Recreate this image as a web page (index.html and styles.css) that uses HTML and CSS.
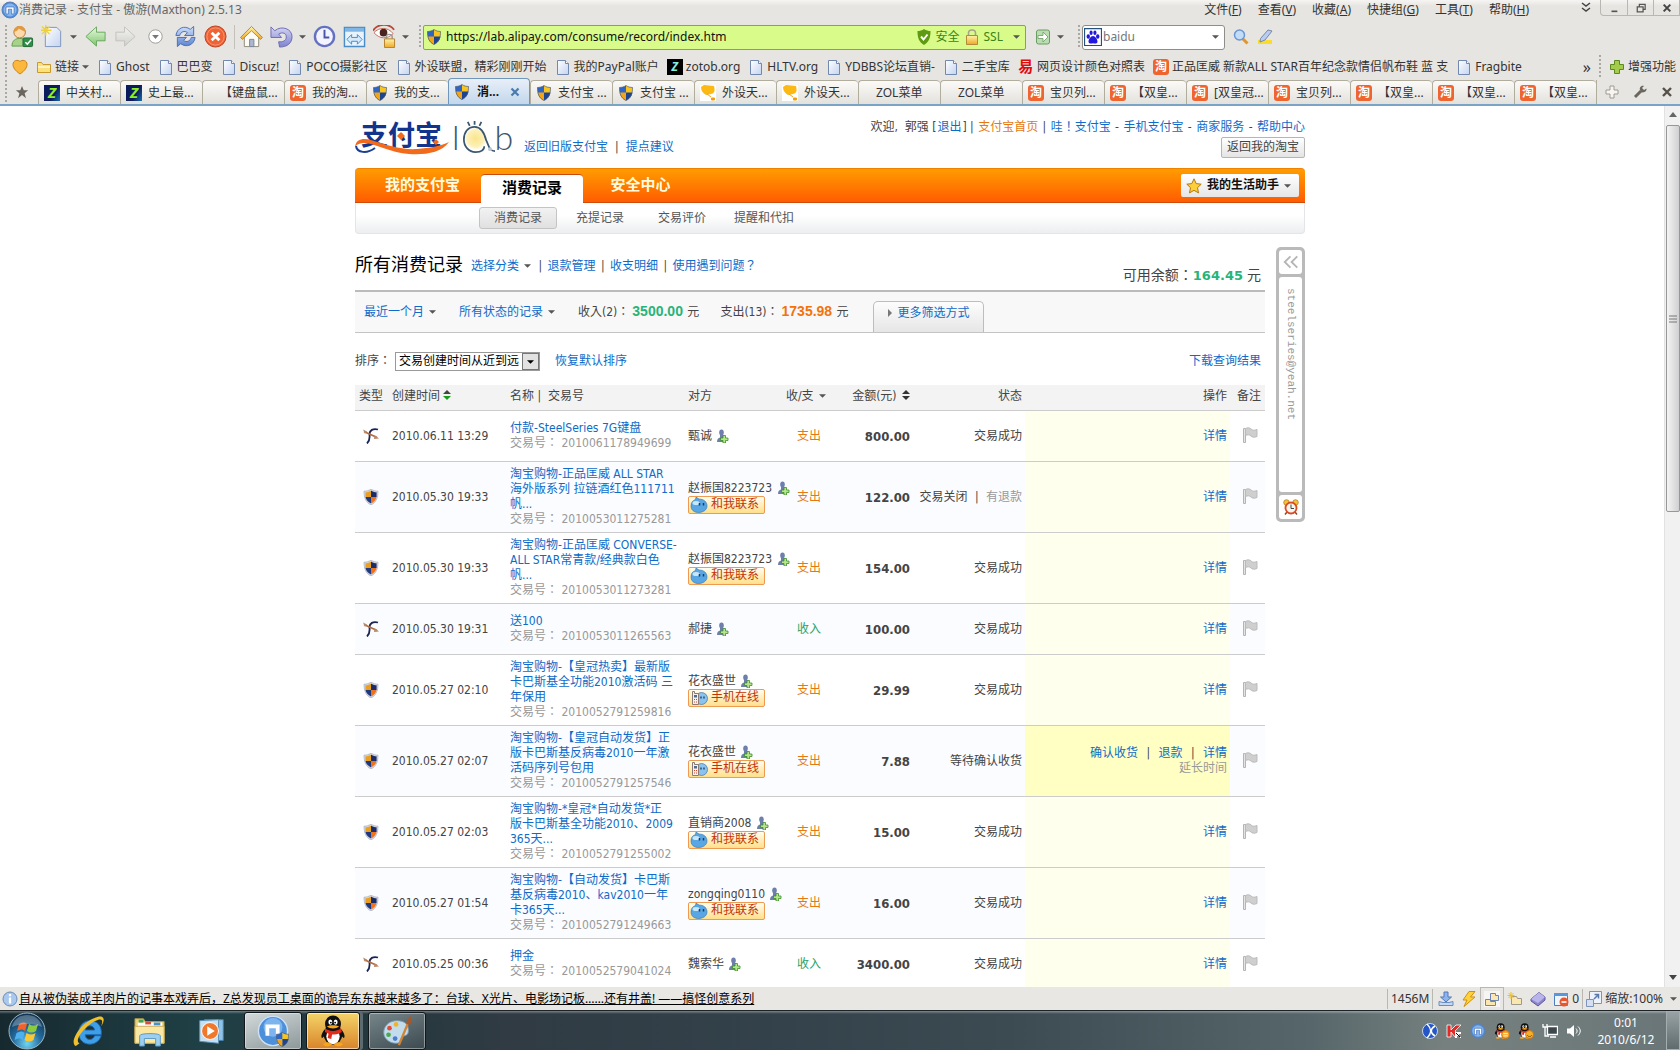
FILE: index.html
```
<!DOCTYPE html>
<html lang="zh-CN">
<head>
    <meta charset="UTF-8">
    <meta name="viewport" content="width=device-width, initial-scale=1.0">
    <title>消费记录 - 支付宝</title>
    <link rel="stylesheet" href="styles.css">
</head>
<body>

<!-- shared icons -->
<svg class="defs" aria-hidden="true">
    <defs>
        <linearGradient id="g-blue" x1="0" y1="0" x2="0" y2="1"><stop offset="0" stop-color="#cfe0fb"/><stop offset="1" stop-color="#5b82d0"/></linearGradient>
        <linearGradient id="g-green" x1="0" y1="0" x2="0" y2="1"><stop offset="0" stop-color="#eafae4"/><stop offset="1" stop-color="#7cc46b"/></linearGradient>
        <linearGradient id="g-gray" x1="0" y1="0" x2="0" y2="1"><stop offset="0" stop-color="#f4f4f2"/><stop offset="1" stop-color="#cfcecb"/></linearGradient>
        <linearGradient id="g-gold" x1="0" y1="0" x2="0" y2="1"><stop offset="0" stop-color="#fff3a8"/><stop offset="1" stop-color="#efa928"/></linearGradient>
        <linearGradient id="g-doc" x1="0" y1="0" x2="1" y2="1"><stop offset="0" stop-color="#fff"/><stop offset="1" stop-color="#c3d3f0"/></linearGradient>
        <linearGradient id="g-violet" x1="0" y1="0" x2="0" y2="1"><stop offset="0" stop-color="#d4d5f4"/><stop offset="1" stop-color="#7f83cc"/></linearGradient>
        <radialGradient id="g-orb" cx=".5" cy=".85" r=".8"><stop offset="0" stop-color="#6fd5f5"/><stop offset=".5" stop-color="#246a9c"/><stop offset="1" stop-color="#0e3353"/></radialGradient>
        <radialGradient id="g-bulb"><stop offset="0" stop-color="#fbe58a"/><stop offset=".7" stop-color="#fdf0b8"/><stop offset="1" stop-color="#fff"/></radialGradient>
    </defs>
    <symbol id="i-doc" viewBox="0 0 16 16"><path d="M2.5 1.500h8l3 3v11h-11z" fill="url(#g-doc)" stroke="#7388ae"/><path d="M10.500 1.500v3h3" fill="#fff" stroke="#7388ae"/></symbol>
    <symbol id="i-shield" viewBox="0 0 16 16"><path d="M8 .5C6 2 3.500 2.500 1.500 2.500 1.500 9 3 13 8 15.500z" fill="#2f66c4"/><path d="M8 .5c2 1.500 4.500 2 6.500 2C14.500 9 13 13 8 15.500z" fill="#f9c51c"/><path d="M1.600 7.500H8v8C4 13.500 2 11 1.600 7.500z" fill="#f2a516"/><path d="M8 7.500h6.400C14 11 12 13.500 8 15.500z" fill="#1c4493"/><path d="M8 .5C6 2 3.500 2.500 1.500 2.500 1.500 9 3 13 8 15.500 13 13 14.500 9 14.500 2.500 12.500 2.500 10 2 8 .5z" fill="none" stroke="#4c5a72" stroke-width=".7"/></symbol>
    <symbol id="i-pay" viewBox="0 0 16 16"><path d="M8 0C6 1.500 3.500 2.200 1 2.200 1 9 3 13.500 8 16 13 13.500 15 9 15 2.200 12.500 2.200 10 1.500 8 0z" fill="#d9dce4" stroke="#9aa0b0" stroke-width=".6"/><path d="M8 1.500C6.500 2.600 4.500 3.200 2.400 3.300V8H8z" fill="#e9a020"/><path d="M8 1.500c1.500 1.100 3.500 1.700 5.600 1.800V8H8z" fill="#1b2c68"/><path d="M2.500 8H8v6.500C5 12.800 3 11 2.500 8z" fill="#20397e"/><path d="M8 8h5.500c-.5 3-2.300 4.800-5.500 6.500z" fill="#f0731c"/></symbol>
    <symbol id="i-bow" viewBox="0 0 16 16"><path d="M15 1.500C10 0 6.500 2.500 6.500 6S7.500 12 4 15.500" fill="none" stroke="#1b2454" stroke-width="1.800"/><path d="M1 3.500l13 6" stroke="#b4693a" stroke-width="1.600"/><path d="M0 1.500l4 2-2 2.500zM11.500 7l4.500 3.500-5 .5z" fill="#b98868"/></symbol>
    <symbol id="i-flag" viewBox="0 0 16 17"><path d="M1.500 1.500v14h2v-14z" fill="#e4e4e4" stroke="#b4b4b4"/><path d="M3.500 1.500c2-1 4-1 5.500.5s3.500 1.500 6 .5v7c-2.500 1-4.500 1-6-.5s-3.500-1.500-5.500-.5z" fill="#cfcfcf" stroke="#bbb"/></symbol>
    <symbol id="i-add" viewBox="0 0 12 14"><ellipse cx="4.500" cy="3.500" rx="2.300" ry="3" fill="#6e7fae"/><path d="M3 5.500h3l1 3.500v4H0c0-3 1.500-4 3-4.500z" fill="#6e7fae"/><path d="M6 6.500h2.500V9H11v2.500H8.500V14H6v-2.500H3.500V9H6z" fill="#b6e58c" stroke="#3b8f26" stroke-width=".8"/></symbol>
    <symbol id="i-ww" viewBox="0 0 18 16"><path d="M6 0l3 2C14 2 17 5 17 9s-4 6.500-8.500 6.500S1 13 1 9s2-5.500 4.500-6.500z" fill="#58a6e4" stroke="#2a70b4" stroke-width=".6"/><ellipse cx="6" cy="6" rx="3.500" ry="2" fill="#c9e7fb"/><path d="M9.500 6v2.500M13.500 6v2.500" stroke="#153c66" stroke-width="1.500"/></symbol>
    <symbol id="i-phone" viewBox="0 0 18 16"><circle cx="11.500" cy="8.500" r="6" fill="#8cc3ee" stroke="#3c74a8" stroke-width=".7"/><path d="M11 6.500v2M14 6.500v2" stroke="#153c66" stroke-width="1.300"/><path d="M2.500 1.500v13h6v-11h-4v-2z" fill="#f5f1ee" stroke="#8c7b74"/><path d="M4 5h3v2.500H4z" fill="#4f6d8d"/><path d="M4 9.500h3M4 12h3" stroke="#d2402c" stroke-dasharray="1 1"/></symbol>
    <symbol id="i-cup" viewBox="0 0 16 16"><path d="M0 0h16v16H0z" fill="#fff"/><path d="M1 2l3-2 10 1c1 4 1 7-3 8l-5 1C3 8 1 6 1 2z" fill="#fcb813"/><path d="M7 9l4 3M11.500 13h3v2h-3z" stroke="#f0a010" fill="#f0a010"/></symbol>
    <symbol id="i-caret" viewBox="0 0 8 4"><path d="M0 0h8L4 4z" fill="currentColor"/></symbol>
    <symbol id="i-m" viewBox="0 0 18 18"><circle cx="9" cy="9" r="8" fill="#4c8bdc" stroke="#5a7fb8"/><circle cx="9" cy="9" r="6.500" fill="#86b4ec"/><path d="M5 13V6h8v7h-2.300V8.200H7.300V13z" fill="#fff" stroke="#2a5ca8" stroke-width=".6"/></symbol>
    <symbol id="i-qq" viewBox="0 0 30 36"><path d="M6 16C2 20 1 25 3 26l3-3M24 16c4 4 5 9 3 10l-3-3" fill="#111"/><ellipse cx="15" cy="22" rx="10.500" ry="11.500" fill="#111"/><ellipse cx="15" cy="24" rx="7.500" ry="9" fill="#fff"/><ellipse cx="15" cy="10" rx="9" ry="9.500" fill="#111"/><ellipse cx="12" cy="8" rx="2.200" ry="3" fill="#fff"/><ellipse cx="18" cy="8" rx="2.200" ry="3" fill="#fff"/><circle cx="12.600" cy="8.500" r="1"/><circle cx="17.400" cy="8.500" r="1"/><path d="M8 13c4-2 10-2 14 0-4 3-10 3-14 0z" fill="#f9a51a"/><path d="M6 15c5 4 13 4 18 0l1 4c-4 3-8 3-11 3l-1 5-4-1 1-5-4-2z" fill="#e02a1c"/><path d="M4 33c2-3 8-3 10 0-2 3-9 3-10 0zM16 33c2-3 8-3 10 0-1 3-8 3-10 0z" fill="#f9a51a"/></symbol>
</svg>

<!-- browser window -->
<header class="titlebar">
    <svg class="i18"><use href="#i-m"/></svg>
    <span class="window-title">消费记录 - 支付宝 - 傲游(Maxthon) 2.5.13</span>
    <nav class="menu">
        <button>文件(<u>F</u>)</button>
        <button>查看(<u>V</u>)</button>
        <button>收藏(<u>A</u>)</button>
        <button>快捷组(<u>G</u>)</button>
        <button>工具(<u>T</u>)</button>
        <button>帮助(<u>H</u>)</button>
    </nav>
    <svg class="menu-more" viewBox="0 0 10 12"><path d="M1 1l4 3 4-3M1 6l4 3 4-3" fill="none" stroke="#444" stroke-width="1.500"/></svg>
    <div class="window-buttons">
        <button aria-label="最小化"><svg viewBox="0 0 12 12"><path d="M3 10h7" stroke="#555" stroke-width="2"/></svg></button>
        <button aria-label="还原"><svg viewBox="0 0 12 12"><path d="M4 4V1.500h7v6H9M1.500 4.500h7v6h-7z" fill="none" stroke="#555" stroke-width="1.500"/></svg></button>
        <button aria-label="关闭"><svg viewBox="0 0 12 12"><path d="M2 2l8 8M10 2l-8 8" stroke="#444" stroke-width="2.400"/></svg></button>
    </div>
</header>

<div class="toolbar">
    <i class="grip"></i>
    <button class="tool" aria-label="用户"><svg viewBox="0 0 24 24"><path d="M1 22c0-6 4-8 8-8s8 2 8 8z" fill="#a6d38a" stroke="#5f9d49"/><circle cx="9" cy="7.500" r="6" fill="#fbd9ab" stroke="#b5742e"/><path d="M3 7c0-8 12-8 12 0-4-1-6-3-7-3-1 2-3 3-5 3z" fill="#e09a42"/><rect x="12.500" y="13.500" width="10" height="9" rx="1" fill="#2f8f4a" stroke="#1f6a34"/><path d="M15 18l2 2 4-4.500" fill="none" stroke="#fff" stroke-width="1.600"/></svg></button>
    <button class="tool" aria-label="新建"><svg viewBox="0 0 24 24"><path d="M4.500 2.500h12l4 4v16h-16z" fill="url(#g-doc)" stroke="#7d93bb"/><path d="M5 0v11M0 5.500h11M1 1.500l8 8M9 1.500l-8 8" stroke="#f0d038" stroke-width="1.400"/></svg></button>
    <svg class="caret"><use href="#i-caret"/></svg>
    <button class="tool" aria-label="后退"><svg viewBox="0 0 24 24"><path d="M2 12L13 2v5.500h9v9h-9V22z" fill="url(#g-green)" stroke="#66a65c"/></svg></button>
    <button class="tool forward" aria-label="前进"><svg viewBox="0 0 24 24"><path d="M22 12L11 2v5.500H2v9h9V22z" fill="url(#g-gray)" stroke="#c2c1be"/></svg></button>
    <button class="tool" aria-label="历史"><svg viewBox="0 0 24 24"><circle cx="12" cy="12" r="7" fill="#fff" stroke="#9b9b98"/><path d="M8.500 10.500h7l-3.500 4z" fill="#777"/></svg></button>
    <button class="tool" aria-label="刷新"><svg viewBox="0 0 24 24"><path d="M2 11C3 3 11 0 17 4.500L20.500 1.500v9.500h-9.500L14 8C11 5.500 7 7 6 11zM22 13c-1 8-9 11-15 6.500L3.500 22.500V13H13l-3 3c3 2.500 7 1 8-3z" fill="url(#g-blue)" stroke="#4a6fb8"/></svg></button>
    <button class="tool" aria-label="停止"><svg viewBox="0 0 24 24"><circle cx="12" cy="12" r="11" fill="#ee6236" stroke="#b8401f"/><circle cx="12" cy="12" r="9" fill="none" stroke="#f79a72"/><path d="M8 8l8 8M16 8l-8 8" stroke="#fff" stroke-width="3"/></svg></button>
    <i class="sep"></i>
    <button class="tool" aria-label="主页"><svg viewBox="0 0 24 24"><path d="M4.500 11v11.500h15V11L12 4z" fill="#fdfbf4" stroke="#8f8b7c"/><path d="M.5 13L12 1.500 23.500 13l-2 2L12 6l-9.500 9z" fill="url(#g-gold)" stroke="#b08a3c"/><path d="M10 15h4.500v7.500H10z" fill="#a9b7cf" stroke="#7c879c"/></svg></button>
    <button class="tool" aria-label="撤销"><svg viewBox="0 0 24 24"><path d="M1 2v11h11L9 9.500c4-2.500 8-1 8 3 0 4-4 5.500-8 5l1 5.500c8 0 13-4 13-11C23 4 12 0 5 6z" fill="url(#g-violet)" stroke="#6a6bb4"/></svg></button>
    <svg class="caret"><use href="#i-caret"/></svg>
    <button class="tool" aria-label="时钟"><svg viewBox="0 0 24 24"><circle cx="12" cy="12" r="10" fill="#f3f4ff" stroke="#6470c0" stroke-width="2.500"/><path d="M12 5v8h5" fill="none" stroke="#4a55a8" stroke-width="2"/></svg></button>
    <button class="tool" aria-label="全屏"><svg viewBox="0 0 24 24"><path d="M1.500 2.500h21v20h-21z" fill="#e8f3fd" stroke="#4a8cc4" stroke-width="1.500"/><path d="M2 3h20v4H2z" fill="#7fb6e4"/><path d="M4 15l5-5v3h6v-3l5 5-5 5v-3H9v3z" fill="#d5ebfb" stroke="#4a8cc4"/></svg></button>
    <button class="tool" aria-label="隐私"><svg viewBox="0 0 24 24"><path d="M0 6C5-2 17-2 22 5" fill="none" stroke="#b84a3c" stroke-width="2"/><path d="M1 8c5-6 15-6 20 1-6 6-14 6-20-1z" fill="#fff" stroke="#c46a58"/><circle cx="11" cy="8" r="4" fill="#4a2420"/><path d="M14 15v-3c0-3 6-3 6 0v3" fill="none" stroke="#999" stroke-width="1.500"/><path d="M12 14.500h10.500v9H12z" fill="url(#g-gold)" stroke="#b5822a"/></svg></button>
    <svg class="caret"><use href="#i-caret"/></svg>
    <i class="grip"></i>
    <div class="address">
        <svg class="i16"><use href="#i-shield"/></svg>
        <input type="text" aria-label="地址" value="https://lab.alipay.com/consume/record/index.htm">
        <svg class="i16" viewBox="0 0 16 16"><path d="M8 0c2 1.500 4.500 2 6.500 2C14.500 9 13 13 8 16 3 13 1.500 9 1.500 2 4 2 6 1.500 8 0z" fill="#5e9a12"/><path d="M5 7.500l2.500 3 4-5" fill="none" stroke="#fff" stroke-width="2"/></svg>
        <span>安全</span>
        <svg class="i16" viewBox="0 0 16 16"><path d="M4.500 7V4c0-4 7-4 7 0v3" fill="none" stroke="#a9a38c" stroke-width="1.600"/><path d="M2.500 6.500h11v9h-11z" fill="url(#g-gold)" stroke="#b58b3a"/></svg>
        <span>SSL</span>
        <svg class="caret"><use href="#i-caret"/></svg>
    </div>
    <button class="go" aria-label="转到"><svg class="i16" viewBox="0 0 16 16"><rect x="1.500" y="1" width="13" height="14" rx="2" fill="#b9dcb0" stroke="#6b9c63"/><path d="M3 6.500h5V3l5 5-5 5V9.500H3z" fill="#fff" stroke="#6b9c63" stroke-width=".8"/></svg></button>
    <svg class="caret"><use href="#i-caret"/></svg>
    <i class="grip"></i>
    <div class="search">
        <svg class="i18" viewBox="0 0 16 16"><path d="M.5.5h15v15H.5z" fill="#fff" stroke="#23527c"/><ellipse cx="3.800" cy="7.500" rx="1.500" ry="2" fill="#2319dc"/><ellipse cx="6.300" cy="4.300" rx="1.400" ry="2" fill="#2319dc"/><ellipse cx="9.700" cy="4.300" rx="1.400" ry="2" fill="#2319dc"/><ellipse cx="12.200" cy="7.500" rx="1.500" ry="2" fill="#2319dc"/><path d="M8 7c2 0 4 3 4 5s-2 2-4 1.500c-2 .5-4 .5-4-1.500s2-5 4-5z" fill="#2319dc"/></svg>
        <input type="text" aria-label="搜索" value="baidu">
        <svg class="caret"><use href="#i-caret"/></svg>
    </div>
    <button class="mini" aria-label="查找"><svg class="i16" viewBox="0 0 16 16"><path d="M9.500 9.500l5 5" stroke="#e0962c" stroke-width="3"/><circle cx="6.500" cy="6" r="5" fill="#c3dcf8" stroke="#6a96d4" stroke-width="1.500"/></svg></button>
    <button class="mini" aria-label="高亮"><svg class="i16" viewBox="0 0 16 16"><path d="M1 11h14v4H1z" fill="#fbdc2a"/><path d="M3.500 9.500L11 1l4 1-7 9-5 2z" fill="#b9cdf0" stroke="#7488ac"/></svg></button>
</div>

<nav class="bookmarks">
    <i class="grip"></i>
    <a href="#" aria-label="收藏夹"><svg class="i16" viewBox="0 0 16 16"><path d="M8 15C3 11.500 1 8.500 1 5.500 1 1 6 .5 8 2.500 10 .5 15 1 15 5.500 15 8.500 13 11.500 8 15z" fill="#fbb83c" stroke="#c98313"/></svg></a>
    <a href="#"><svg class="i16" viewBox="0 0 16 16"><path d="M1.500 13.500v-10h4l1.500 2h7.500v8z" fill="#fce07c" stroke="#c89a2c"/><path d="M2 8h12" stroke="#fff3bc" stroke-width="2"/></svg>链接<svg class="caret"><use href="#i-caret"/></svg></a>
    <a href="#"><svg class="i16"><use href="#i-doc"/></svg>Ghost</a>
    <a href="#"><svg class="i16"><use href="#i-doc"/></svg>巴巴变</a>
    <a href="#"><svg class="i16"><use href="#i-doc"/></svg>Discuz!</a>
    <a href="#"><svg class="i16"><use href="#i-doc"/></svg>POCO摄影社区</a>
    <a href="#"><svg class="i16"><use href="#i-doc"/></svg>外设联盟，精彩刚刚开始</a>
    <a href="#"><svg class="i16"><use href="#i-doc"/></svg>我的PayPal账户</a>
    <a href="#"><b class="fav zotob">Z</b>zotob.org</a>
    <a href="#"><svg class="i16"><use href="#i-doc"/></svg>HLTV.org</a>
    <a href="#"><svg class="i16"><use href="#i-doc"/></svg>YDBBS论坛直销-</a>
    <a href="#"><svg class="i16"><use href="#i-doc"/></svg>二手宝库</a>
    <a href="#"><b class="fav yi">易</b>网页设计颜色对照表</a>
    <a href="#"><b class="fav tao">淘</b>正品匡威 新款ALL STAR百年纪念款情侣帆布鞋 蓝 支</a>
    <a href="#"><svg class="i16"><use href="#i-doc"/></svg>Fragbite</a>
    <span class="more">»</span>
    <i class="grip"></i>
    <a href="#" class="enhance"><svg class="i16" viewBox="0 0 16 16"><path d="M5.500 1.500h5v4h4v5h-4v4h-5v-4h-4v-5h4z" fill="#a4cc4c" stroke="#5c8a1c"/></svg>增强功能</a>
</nav>

<div class="tabs">
    <i class="grip"></i>
    <svg class="star" viewBox="0 0 16 16"><path d="M8 1l2 5h5l-4 3.500L12.500 15 8 11.500 3.500 15 5 9.500 1 6h5z" fill="#6b675f"/></svg>
    <a class="tab" href="#"><b class="fav zol">Z</b>中关村...</a>
    <a class="tab" href="#"><b class="fav zol">Z</b>史上最...</a>
    <a class="tab plain" href="#">【键盘鼠...</a>
    <a class="tab" href="#"><b class="fav tao">淘</b>我的淘...</a>
    <a class="tab" href="#"><svg class="i16"><use href="#i-shield"/></svg>我的支...</a>
    <a class="tab active" href="#"><svg class="i16"><use href="#i-shield"/></svg>消...<svg class="tab-close" viewBox="0 0 10 10"><path d="M1.500 1.500l7 7M8.500 1.500l-7 7" stroke="#4a7ab0" stroke-width="2.200"/></svg></a>
    <a class="tab" href="#"><svg class="i16"><use href="#i-shield"/></svg>支付宝 ...</a>
    <a class="tab" href="#"><svg class="i16"><use href="#i-shield"/></svg>支付宝 ...</a>
    <a class="tab" href="#"><svg class="i16"><use href="#i-cup"/></svg>外设天...</a>
    <a class="tab" href="#"><svg class="i16"><use href="#i-cup"/></svg>外设天...</a>
    <a class="tab plain" href="#">ZOL菜单</a>
    <a class="tab plain" href="#">ZOL菜单</a>
    <a class="tab" href="#"><b class="fav tao">淘</b>宝贝列...</a>
    <a class="tab" href="#"><b class="fav tao">淘</b>【双皇...</a>
    <a class="tab" href="#"><b class="fav tao">淘</b>[双皇冠...</a>
    <a class="tab" href="#"><b class="fav tao">淘</b>宝贝列...</a>
    <a class="tab" href="#"><b class="fav tao">淘</b>【双皇...</a>
    <a class="tab" href="#"><b class="fav tao">淘</b>【双皇...</a>
    <a class="tab" href="#"><b class="fav tao">淘</b>【双皇...</a>
    <div class="tab-tools">
        <svg viewBox="0 0 14 14"><path d="M5 1h4v4h4v4H9v4H5V9H1V5h4z" fill="#f6f5f2" stroke="#9d9a90"/></svg>
        <svg viewBox="0 0 14 14"><path d="M2 12l6-6" stroke="#6b675f" stroke-width="3"/><path d="M7 5c-1-3 2-5 4-4L9 3l2 2 2.500-1.500C14 6 11 8.500 8 7z" fill="#6b675f"/></svg>
        <svg viewBox="0 0 14 14"><path d="M3 3l8 8M11 3l-8 8" stroke="#555149" stroke-width="2.400"/></svg>
    </div>
</div>

<!-- page -->
<div class="viewport">
<main class="page">
    <div class="top">
        <div class="logo">
            <span class="logo-name">支付宝</span>
            <svg class="swoosh" viewBox="0 0 96 32"><path d="M0 23C1 15 8 14 16 16c16 5 30 10 46 9 13-1 23-3 32-7-8 11-24 13-40 12C36 29 22 20 10 19 5 19 2 20 0 23z" fill="#f26a1b"/><path d="M1 22c1 7 11 8 19 2" fill="none" stroke="#1b3f94" stroke-width="2"/><path d="M46 8l4 4-4 4-4-4zM81 15l3 3-3 3-3-3z" fill="#f26a1b"/></svg>
            <span class="logo-lab">l<svg viewBox="0 0 36 34"><circle cx="16" cy="18" r="12" fill="url(#g-bulb)"/><path d="M36 31c-6 0-6-5-9-11C25 12 21 6 15 6 8 6 4 12 4 19s5 13 12 13c7 0 9-3 9-6" fill="none" stroke="#3b5670" stroke-width="1.800"/><path d="M15 4V0M10 5L8 1M20 5l2-4" stroke="#3b5670" stroke-width="1.800"/><circle cx="31" cy="29" r="2" fill="#b9c4d4"/></svg>b</span>
        </div>
        <div class="old-links"><a href="#">返回旧版支付宝</a><i>|</i><a href="#">提点建议</a></div>
        <div class="user">
            <p>欢迎,&nbsp; 郭强 [<a href="#">退出</a>] | <a href="#" class="home">支付宝首页</a> | <a href="#" class="wow">哇！支付宝</a> - <a href="#">手机支付宝</a> - <a href="#">商家服务</a> - <a href="#">帮助中心</a></p>
            <button class="to-taobao">返回我的淘宝</button>
        </div>
    </div>

    <nav class="nav">
        <a href="#">我的支付宝</a>
        <a href="#" class="current">消费记录</a>
        <a href="#">安全中心</a>
        <button class="helper"><svg viewBox="0 0 16 16"><path d="M8 .8l2.200 4.800 5 .6-3.700 3.500 1 5.200L8 12.300l-4.500 2.600 1-5.200L.8 6.200l5-.6z" fill="#fbd03c" stroke="#b8780c"/></svg>我的生活助手<svg class="caret"><use href="#i-caret"/></svg></button>
    </nav>
    <nav class="subnav">
        <a href="#" class="current">消费记录</a>
        <a href="#">充提记录</a>
        <a href="#">交易评价</a>
        <a href="#">提醒和代扣</a>
    </nav>

    <div class="columns">
        <section class="records">
            <div class="heading">
                <h1>所有消费记录</h1>
                <p><a href="#">选择分类<svg class="caret"><use href="#i-caret"/></svg></a> <i>|</i> <a href="#">退款管理</a> <i>|</i> <a href="#">收支明细</a> <i>|</i> <a href="#">使用遇到问题？</a></p>
                <div class="balance">可用余额：<b>164.45</b> 元</div>
            </div>

            <div class="filter">
                <a href="#">最近一个月<svg class="caret"><use href="#i-caret"/></svg></a>
                <a href="#">所有状态的记录<svg class="caret"><use href="#i-caret"/></svg></a>
                <span>收入(2)：<b class="in">3500.00</b> 元</span>
                <span>支出(13)：<b class="out">1735.98</b> 元</span>
                <button class="more-filter"><svg viewBox="0 0 4 8"><path d="M0 0l4 4-4 4z" fill="#777"/></svg>更多筛选方式</button>
            </div>

            <div class="sort">
                <label for="order">排序：</label>
                <span class="select">
                    <select id="order"><option>交易创建时间从近到远</option></select>
                    <i><svg class="caret"><use href="#i-caret"/></svg></i>
                </span>
                <a href="#">恢复默认排序</a>
                <a href="#" class="download">下载查询结果</a>
            </div>

            <table>
                <colgroup><col class="c-type"><col class="c-time"><col class="c-name"><col class="c-party"><col class="c-dir"><col class="c-sum"><col class="c-state"><col class="c-op"><col class="c-note"></colgroup>
                <thead>
                    <tr>
                        <th>类型</th>
                        <th class="time">创建时间 <svg class="updown" viewBox="0 0 8 10"><path d="M0 4l4-4 4 4z" fill="#444"/><path d="M0 6l4 4 4-4z" fill="#1a9a1a"/></svg></th>
                        <th class="name">名称&nbsp;|&nbsp; 交易号</th>
                        <th class="party">对方</th>
                        <th class="dir">收/支 <svg class="caret"><use href="#i-caret"/></svg></th>
                        <th class="sum">金额(元) <svg class="updown" viewBox="0 0 8 10"><path d="M0 4l4-4 4 4zM0 6l4 4 4-4z" fill="#333"/></svg></th>
                        <th class="state">状态</th>
                        <th class="op">操作</th>
                        <th class="note">备注</th>
                    </tr>
                </thead>
                <tbody>
                    <tr>
                        <td class="type"><svg><use href="#i-bow"/></svg></td>
                        <td class="time">2010.06.11 13:29</td>
                        <td class="name"><a href="#">付款-SteelSeries 7G键盘</a><span>交易号： 2010061178949699</span></td>
                        <td class="party">甄诚 <svg class="add"><use href="#i-add"/></svg></td>
                        <td class="dir out">支出</td>
                        <td class="sum">800.00</td>
                        <td class="state">交易成功</td>
                        <td class="op"><a href="#">详情</a></td>
                        <td class="note"><svg><use href="#i-flag"/></svg></td>
                    </tr>
                    <tr>
                        <td class="type"><svg><use href="#i-pay"/></svg></td>
                        <td class="time">2010.05.30 19:33</td>
                        <td class="name"><a href="#">淘宝购物-正品匡威 ALL STAR<br>海外版系列 拉链酒红色111711<br>帆...</a><span>交易号： 2010053011275281</span></td>
                        <td class="party">赵振国8223723 <svg class="add"><use href="#i-add"/></svg><button class="chat"><svg><use href="#i-ww"/></svg>和我联系</button></td>
                        <td class="dir out">支出</td>
                        <td class="sum">122.00</td>
                        <td class="state">交易关闭 <i>|</i> <span>有退款</span></td>
                        <td class="op"><a href="#">详情</a></td>
                        <td class="note"><svg><use href="#i-flag"/></svg></td>
                    </tr>
                    <tr>
                        <td class="type"><svg><use href="#i-pay"/></svg></td>
                        <td class="time">2010.05.30 19:33</td>
                        <td class="name"><a href="#">淘宝购物-正品匡威 CONVERSE-<br>ALL STAR常青款/经典款白色<br>帆...</a><span>交易号： 2010053011273281</span></td>
                        <td class="party">赵振国8223723 <svg class="add"><use href="#i-add"/></svg><button class="chat"><svg><use href="#i-ww"/></svg>和我联系</button></td>
                        <td class="dir out">支出</td>
                        <td class="sum">154.00</td>
                        <td class="state">交易成功</td>
                        <td class="op"><a href="#">详情</a></td>
                        <td class="note"><svg><use href="#i-flag"/></svg></td>
                    </tr>
                    <tr>
                        <td class="type"><svg><use href="#i-bow"/></svg></td>
                        <td class="time">2010.05.30 19:31</td>
                        <td class="name"><a href="#">送100</a><span>交易号： 2010053011265563</span></td>
                        <td class="party">郝捷 <svg class="add"><use href="#i-add"/></svg></td>
                        <td class="dir in">收入</td>
                        <td class="sum">100.00</td>
                        <td class="state">交易成功</td>
                        <td class="op"><a href="#">详情</a></td>
                        <td class="note"><svg><use href="#i-flag"/></svg></td>
                    </tr>
                    <tr>
                        <td class="type"><svg><use href="#i-pay"/></svg></td>
                        <td class="time">2010.05.27 02:10</td>
                        <td class="name"><a href="#">淘宝购物-【皇冠热卖】最新版<br>卡巴斯基全功能2010激活码 三<br>年保用</a><span>交易号： 2010052791259816</span></td>
                        <td class="party">花衣盛世 <svg class="add"><use href="#i-add"/></svg><button class="chat"><svg><use href="#i-phone"/></svg>手机在线</button></td>
                        <td class="dir out">支出</td>
                        <td class="sum">29.99</td>
                        <td class="state">交易成功</td>
                        <td class="op"><a href="#">详情</a></td>
                        <td class="note"><svg><use href="#i-flag"/></svg></td>
                    </tr>
                    <tr class="pending">
                        <td class="type"><svg><use href="#i-pay"/></svg></td>
                        <td class="time">2010.05.27 02:07</td>
                        <td class="name"><a href="#">淘宝购物-【皇冠自动发货】正<br>版卡巴斯基反病毒2010一年激<br>活码序列号包用</a><span>交易号： 2010052791257546</span></td>
                        <td class="party">花衣盛世 <svg class="add"><use href="#i-add"/></svg><button class="chat"><svg><use href="#i-phone"/></svg>手机在线</button></td>
                        <td class="dir out">支出</td>
                        <td class="sum">7.88</td>
                        <td class="state">等待确认收货</td>
                        <td class="op"><a href="#">确认收货</a> <i>|</i> <a href="#">退款</a> <i>|</i> <a href="#">详情</a><br><span>延长时间</span></td>
                        <td class="note"><svg><use href="#i-flag"/></svg></td>
                    </tr>
                    <tr>
                        <td class="type"><svg><use href="#i-pay"/></svg></td>
                        <td class="time">2010.05.27 02:03</td>
                        <td class="name"><a href="#">淘宝购物-*皇冠*自动发货*正<br>版卡巴斯基全功能2010、2009<br>365天...</a><span>交易号： 2010052791255002</span></td>
                        <td class="party">直销商2008 <svg class="add"><use href="#i-add"/></svg><button class="chat"><svg><use href="#i-ww"/></svg>和我联系</button></td>
                        <td class="dir out">支出</td>
                        <td class="sum">15.00</td>
                        <td class="state">交易成功</td>
                        <td class="op"><a href="#">详情</a></td>
                        <td class="note"><svg><use href="#i-flag"/></svg></td>
                    </tr>
                    <tr>
                        <td class="type"><svg><use href="#i-pay"/></svg></td>
                        <td class="time">2010.05.27 01:54</td>
                        <td class="name"><a href="#">淘宝购物-【自动发货】卡巴斯<br>基反病毒2010、kav2010一年<br>卡365天...</a><span>交易号： 2010052791249663</span></td>
                        <td class="party">zongqing0110 <svg class="add"><use href="#i-add"/></svg><button class="chat"><svg><use href="#i-ww"/></svg>和我联系</button></td>
                        <td class="dir out">支出</td>
                        <td class="sum">16.00</td>
                        <td class="state">交易成功</td>
                        <td class="op"><a href="#">详情</a></td>
                        <td class="note"><svg><use href="#i-flag"/></svg></td>
                    </tr>
                    <tr>
                        <td class="type"><svg><use href="#i-bow"/></svg></td>
                        <td class="time">2010.05.25 00:36</td>
                        <td class="name"><a href="#">押金</a><span>交易号： 2010052579041024</span></td>
                        <td class="party">魏索华 <svg class="add"><use href="#i-add"/></svg></td>
                        <td class="dir in">收入</td>
                        <td class="sum">3400.00</td>
                        <td class="state">交易成功</td>
                        <td class="op"><a href="#">详情</a></td>
                        <td class="note"><svg><use href="#i-flag"/></svg></td>
                    </tr>
                </tbody>
            </table>
        </section>

        <aside class="account">
            <button aria-label="展开"><svg viewBox="0 0 14 12"><path d="M6.500 1l-5 5 5 5M12.500 1l-5 5 5 5" fill="none" stroke="#b5b5b5" stroke-width="1.600"/></svg></button>
            <div class="mail">steelseries@yeah.net</div>
            <button aria-label="提醒"><svg viewBox="0 0 16 16"><circle cx="3.500" cy="3.500" r="2.800" fill="#f4c23a" stroke="#a8741a" stroke-width=".7"/><circle cx="12.500" cy="3.500" r="2.800" fill="#f4c23a" stroke="#a8741a" stroke-width=".7"/><path d="M4 13l-2 2.500M12 13l2 2.500" stroke="#8a4a2a" stroke-width="1.500"/><circle cx="8" cy="9" r="5.500" fill="#f6f6f0" stroke="#dc4a22" stroke-width="1.800"/><path d="M8 5.500V9.500h3" fill="none" stroke="#444"/></svg></button>
        </aside>
    </div>
</main>
<div class="scrollbar">
    <svg viewBox="0 0 8 5"><path d="M0 5l4-5 4 5z" fill="#666"/></svg>
    <i class="thumb"><svg viewBox="0 0 8 8"><path d="M0 1h8M0 4h8M0 7h8" stroke="#777"/></svg></i>
    <svg viewBox="0 0 8 5"><path d="M0 0l4 5 4-5z" fill="#444"/></svg>
</div>
</div>

<div class="statusbar">
    <svg class="i16" viewBox="0 0 16 16"><circle cx="8" cy="8" r="7" fill="#a9c8ee" stroke="#6c8db8"/><path d="M8 3v2.200M8 6.500v6" stroke="#fff" stroke-width="2.200"/></svg>
    <a href="#">自从被伪装成羊肉片的记事本戏弄后，Z总发现员工桌面的诡异东东越来越多了：台球、X光片、电影场记板……还有井盖! ——搞怪创意系列</a>
    <div class="status-tools">
        <span class="cell">1456M</span>
        <span class="cell icons">
            <svg class="i16" viewBox="0 0 16 16"><path d="M6 1h4v5h3.500L8 11 2.500 6H6z" fill="#8db4ec" stroke="#5079bc"/><path d="M1 10.500v4h14v-4l-4 1H5z" fill="#c4d7f4" stroke="#6a8cc0"/></svg>
            <svg class="i16" viewBox="0 0 16 16"><path d="M8 .5L2 9h4l-3 6.500L14 6H9.500L14 .5z" fill="#ffd23a" stroke="#cf8f10"/></svg>
            <svg class="i16 pressed" viewBox="0 0 16 16"><path d="M6.500 2.500h5v2h3v5h-8zM1.500 8.500h5v2h5v4h-10z" fill="#fbe6ad" stroke="#6b84b4"/></svg>
            <svg class="i16" viewBox="0 0 16 16"><path d="M4.500 5.500h5l1 2h4v6h-10z" fill="#fbe6ad" stroke="#9a9a90"/><path d="M4 1v7M.5 4.500h7M1.500 2l5 5M6.500 2l-5 5" stroke="#f0c020"/></svg>
            <svg class="i16" viewBox="0 0 16 16"><path d="M1 8l8-6.500L15 6v3l-7 6-7-5z" fill="#8d86cc" stroke="#5d579c"/><path d="M1 8l8-6.500L15 6l-7 6z" fill="#b9b5ec"/></svg>
            <svg class="i16" viewBox="0 0 16 16"><path d="M1.500 2.500h13v12h-13z" fill="#eef5fd" stroke="#4a7fc0"/><path d="M1 2h14v3H1z" fill="#5c96d8"/><circle cx="11" cy="11" r="4.500" fill="#e8562e"/><path d="M8.500 11h5" stroke="#fff" stroke-width="1.600"/></svg>
            0
        </span>
        <span class="cell"><svg class="i16" viewBox="0 0 16 16"><path d="M3.500.5h12v12h-12z" fill="#eef3fb" stroke="#7d93bb"/><path d="M.5 8.500h7v7h-7z" fill="#d4dff2" stroke="#7d93bb"/><path d="M8 8l4-4M8.500 3.500h4v4" fill="none" stroke="#5a78ac" stroke-width="1.500"/></svg>缩放:100%<svg class="caret"><use href="#i-caret"/></svg></span>
    </div>
</div>

<!-- desktop taskbar -->
<footer class="taskbar">
    <button class="task orb" aria-label="开始"><svg viewBox="0 0 38 38"><circle cx="19" cy="19" r="18" fill="url(#g-orb)" stroke="#9db9c4"/><path d="M11 12c3-2 6-2 8 0l-2 7c-2-2-5-2-8 0z" fill="#f0642c"/><path d="M21 12c3 2 6 2 9 0l-2 7c-3 2-6 2-9 0z" fill="#8ccc3c"/><path d="M8.500 21c3-2 6-2 8 0l-2 7c-2-2-5-2-8 0z" fill="#4fb0ee"/><path d="M18.500 21c3 2 6 2 9 0l-2 7c-3 2-6 2-9 0z" fill="#fbc834"/><path d="M4 15C6 6 13 3 19 3s13 3 15 12c-8-4-22-4-30 0z" fill="#fff" opacity=".28"/></svg></button>
    <button class="task" aria-label="Internet Explorer"><svg viewBox="0 0 34 34"><path d="M30 22c-2 6-7 9-12 9-7 0-12-5-12-12S11 6 18 6c9 0 13 7 12 15H13c0 6 8 7 10 1zM13 16h10c-1-6-9-6-10 0z" fill="#3f9fe6" stroke="#1c68b4"/><path d="M3 33C-5 29 9 6 26 2c8-2 8 4 4 10 2-6 1-8-3-7C14 9 0 28 7 30z" fill="#f2c02e"/></svg></button>
    <button class="task" aria-label="资源管理器"><svg viewBox="0 0 34 34"><path d="M1 4h9l2 3h20v23H1z" fill="#ecd078" stroke="#b89848"/><path d="M4 8h26v6H4z" fill="#fff"/><path d="M5 5h5v3H5z" fill="#3fa85c"/><path d="M12 7h6v3h-6z" fill="#d2503c"/><path d="M21 8h7v3h-7z" fill="#4a90c8"/><path d="M1 12h31v18H1z" fill="#fae8a2" stroke="#c8aa58"/><path d="M6 33V22c0-3 22-3 22 0v11h-5v-8H11v8z" fill="#9dd0f0" stroke="#5a98c4"/></svg></button>
    <button class="task" aria-label="媒体播放器"><svg viewBox="0 0 34 34"><path d="M10 5h20v22H10z" fill="#8fc4e8" stroke="#4a84b0"/><path d="M5 6l20-1v25L5 28z" fill="#c4e0f2" stroke="#5a90b8"/><circle cx="16" cy="17" r="9" fill="#f0782c" stroke="#fff"/><path d="M13 12l8 5-8 5z" fill="#fff"/></svg></button>
    <button class="task window front" aria-label="傲游"><svg viewBox="0 0 34 34"><circle cx="17" cy="17" r="15.500" fill="#4c90dc" stroke="#cfe2f5" stroke-width="1.500"/><circle cx="17" cy="13" r="10" fill="#7db4ee"/><path d="M9 22V10h15v12h-4v-8h-7v8z" fill="#fff"/><svg x="19" y="18" width="16" height="16"><use href="#i-shield"/></svg></svg></button>
    <button class="task window qq" aria-label="QQ"><svg viewBox="0 0 30 36"><use href="#i-qq"/></svg></button>
    <button class="task window" aria-label="画图"><svg viewBox="0 0 34 34"><path d="M17 6c8 0 13 4 12 12-1 5-5 3-7 6s0 6-6 6C8 30 2 24 3 17S10 6 17 6z" fill="#c3dcec" stroke="#7c9cb4"/><circle cx="9" cy="14" r="2.500" fill="#e04c3c"/><circle cx="16" cy="10" r="2.500" fill="#f0b428"/><circle cx="8" cy="21" r="2.500" fill="#4ca84c"/><circle cx="15" cy="25" r="2.500" fill="#4c7cd0"/><path d="M19 32L29 8" stroke="#d08434" stroke-width="2.500"/><path d="M27 9c0-4 3-6 4-8 2 3 2 7-1 10z" fill="#a4582c"/></svg></button>
    <div class="tray">
        <svg class="i16" viewBox="0 0 16 16"><circle cx="8" cy="8" r="7.500" fill="#2456c8" stroke="#c4d4f0"/><path d="M5 1c5 5 5 9 0 14M13 3c-5 3-5 7 0 10" fill="none" stroke="#fff" stroke-width="1.600"/></svg>
        <svg class="i16" viewBox="0 0 16 16"><path d="M1 2h4v5l5-5h5L9 8l5 6H9L5 9v5H1z" fill="#e02c28" stroke="#fff" stroke-width=".8"/><path d="M9 9h6v6H9z" fill="#fff"/><path d="M10 10l4 4m0-3v3h-3" fill="none" stroke="#111"/></svg>
        <svg class="i16"><use href="#i-m"/></svg>
        <svg class="i16" viewBox="0 0 18 18"><svg width="15" height="18"><use href="#i-qq"/></svg><circle cx="13" cy="13" r="4.500" fill="#f8a828" stroke="#c87410"/><path d="M10.500 12h5M10.500 14.500h5" stroke="#fff"/></svg>
        <svg class="i16" viewBox="0 0 18 18"><svg width="15" height="18"><use href="#i-qq"/></svg><circle cx="13" cy="13" r="4.500" fill="#f8b028" stroke="#c87410"/><path d="M10.500 13.500c1 2.500 4 2.500 5 0" fill="none" stroke="#7c4808"/></svg>
        <svg class="i16" viewBox="0 0 16 16"><path d="M5.500 3.500h10v8h-10zM8 14h6" fill="#3b474c" stroke="#fff" stroke-width="1.300"/><path d="M1 1v3h4V1M3 4v9h4" fill="none" stroke="#fff" stroke-width="1.300"/></svg>
        <svg class="i16" viewBox="0 0 16 16"><path d="M1 5.500h3L8 2v12l-4-3.500H1z" fill="#fff"/><path d="M10 5.500c1.500 1.500 1.500 3.500 0 5M12 3.500c3 3 3 6 0 9" fill="none" stroke="#fff"/></svg>
    </div>
    <div class="clock">0:01<br>2010/6/12</div>
    <button class="show-desktop" aria-label="显示桌面"></button>
</footer>

</body>
</html>
```

FILE: styles.css
```
* {
    box-sizing: border-box;
}

body {
    margin: 0;
    height: 100vh;
    display: flex;
    flex-direction: column;
    overflow: hidden;
    background: #e7e5e1;
    color: #333;
    font: 12px/16px "Noto Sans", "Noto Sans CJK SC", sans-serif;
    white-space: nowrap;
}

a {
    color: inherit;
    text-decoration: none;
}

i {
    font-style: normal;
}

p, h1 {
    margin: 0;
    font-weight: normal;
}

button, input, select {
    margin: 0;
    padding: 0;
    border: 0;
    background: none;
    color: inherit;
    font: inherit;
}

svg {
    flex: none;
}

.defs {
    position: absolute;
    width: 0;
    height: 0;
}

.i16 {
    width: 16px;
    height: 16px;
}

.i18 {
    width: 18px;
    height: 18px;
}

.caret {
    width: 7px;
    height: 4px;
    color: #555;
}

.grip {
    flex: none;
    width: 2px;
    height: 24px;
    background: repeating-linear-gradient(#aaa8a3 0 2px, transparent 2px 4px);
}

/* title bar */
.titlebar {
    display: flex;
    align-items: center;
    height: 20px;
    padding-left: 1px;
    background: linear-gradient(#f6f5f3, #e7e5e1 6px);
}

.window-title {
    color: #666;
}

.menu {
    display: flex;
    gap: 16px;
    margin-left: auto;
    padding-right: 2px;
}

.menu-more {
    width: 10px;
    height: 12px;
    margin: 0 9px 4px 50px;
}

.window-buttons {
    display: flex;
    align-self: flex-start;
    height: 16px;
    border: 1px solid #b9b7b1;
    border-top: 0;
    border-radius: 0 0 0 4px;
}

.window-buttons button {
    display: flex;
    align-items: center;
    justify-content: center;
    width: 26px;
    border-left: 1px solid #b9b7b1;
}

.window-buttons button:first-child {
    border-left: 0;
}

.window-buttons svg {
    width: 10px;
    height: 10px;
}

/* toolbar */
.toolbar {
    display: flex;
    align-items: center;
    height: 34px;
    padding-left: 5px;
}

.tool {
    width: 30px;
    height: 24px;
    text-align: center;
}

.tool svg {
    width: 23px;
    height: 23px;
}

.tool + .caret {
    margin: 0 3px;
}

.toolbar .sep {
    width: 1px;
    height: 24px;
    margin: 0 1px 0 4px;
    background: #c2c0bb;
}

.toolbar .caret + .grip {
    margin-left: 7px;
}

.address {
    display: flex;
    align-items: center;
    flex: 0 1 603px;
    height: 25px;
    margin-left: 2px;
    padding: 0 5px 0 2px;
    gap: 4px;
    border: 1px solid #8d9b70;
    border-radius: 2px;
    background: #d9fb8a;
    color: #3c8414;
}

.address input {
    flex: 1;
    min-width: 0;
    color: #111;
}

.address .caret {
    margin-left: 6px;
}

.go {
    margin: 0 6px 0 9px;
}

.go svg, .mini svg {
    display: block;
}

.toolbar .caret + .grip ~ .caret + .grip {
    margin-left: 14px;
}

.search {
    display: flex;
    align-items: center;
    width: 143px;
    height: 25px;
    margin-left: 2px;
    padding: 0 5px 0 1px;
    gap: 1px;
    border: 1px solid #8f8d87;
    border-radius: 3px;
    background: #fff;
}

.search input {
    flex: 1;
    min-width: 0;
    color: #777;
}

.mini {
    margin-left: 8px;
}

/* bookmarks */
.bookmarks {
    display: flex;
    align-items: center;
    height: 25px;
    padding: 0 4px 0 5px;
    gap: 8px;
}

.bookmarks a {
    display: flex;
    align-items: center;
    gap: 3px;
}

.bookmarks .grip:first-child {
    margin-right: -3px;
}

.bookmarks .more {
    margin-left: auto;
    font-size: 16px;
}

.fav {
    display: inline-block;
    flex: none;
    width: 16px;
    height: 16px;
    border-radius: 3px;
    font-size: 12px;
    line-height: 15px;
    text-align: center;
}

.zotob {
    border-radius: 0;
    background: #000;
    color: #7ff0e4;
    font-style: italic;
}

.zol {
    border-radius: 0;
    background: linear-gradient(120deg, #0b1c5c 60%, #1470b0);
    color: #8cf01c;
    font-size: 15px;
    font-style: italic;
}

.yi {
    color: #e00c0c;
    font-size: 15px;
}

.tao {
    background: #ee6530;
    color: #fff;
}

/* tabs */
.tabs {
    display: flex;
    align-items: flex-end;
    height: 27px;
    padding-left: 5px;
    border-bottom: 2px solid #7aa3c8;
}

.star {
    width: 14px;
    height: 14px;
    margin: 0 9px 5px 8px;
}

.tab {
    display: flex;
    align-items: center;
    flex: 0 1 82px;
    height: 24px;
    padding-left: 5px;
    gap: 6px;
    border: 1px solid #b1ad9d;
    border-right-width: 0;
    border-bottom: 0;
    border-radius: 4px 4px 0 0;
    background: linear-gradient(#fbfaf8, #e3e1dc);
    overflow: hidden;
}

.tab.plain {
    padding-left: 17px;
}

.tab.active {
    height: 26px;
    gap: 7px;
    border: 1px solid #6f97bd;
    border-bottom: 0;
    background: linear-gradient(#e8eff8, #c3d7ec);
    color: #111;
    font-weight: bold;
}

.tab-close {
    width: 10px;
    height: 10px;
    margin-left: 4px;
}

.tab-tools {
    display: flex;
    align-items: center;
    justify-content: space-between;
    flex: 1;
    height: 24px;
    padding: 0 6px 0 8px;
    border-left: 1px solid #b1ad9d;
}

.tab-tools svg {
    width: 14px;
    height: 14px;
}

/* page area */
.viewport {
    display: flex;
    flex: 1;
    min-height: 0;
    overflow: hidden;
    background: #fff;
    color: #444;
    font-family: "DejaVu Sans Condensed", "Noto Sans CJK SC", sans-serif;
    line-height: 15px;
}

/* centred full-width punctuation */
.name span, .balance, .filter > span, .sort label, .wow, .heading p a:last-child {
    font-family: "DejaVu Sans Condensed", "Noto Sans CJK TC", sans-serif;
    font-feature-settings: "locl" 0;
}

.page {
    width: 100%;
    max-width: 950px;
    margin: 0 auto;
}

.page a {
    color: #0e6bc9;
}

.scrollbar {
    display: flex;
    flex-direction: column;
    align-items: center;
    width: 16px;
    margin-left: 4px;
    padding: 6px 0 7px;
    border-left: 1px solid #e2e2e2;
    background: #f1f1f1;
}

.scrollbar svg {
    width: 8px;
    height: 5px;
}

.thumb {
    display: flex;
    align-items: center;
    justify-content: center;
    width: 14px;
    height: 387px;
    margin: 8px 0 auto;
    border: 1px solid #979797;
    border-radius: 2px;
    background: linear-gradient(90deg, #f4f4f4, #d0d0d2);
}

.thumb svg {
    height: 8px;
}

.top {
    display: flex;
    height: 62px;
}

.logo {
    position: relative;
    display: flex;
    width: 160px;
    padding-top: 13px;
}

.logo-name {
    padding-left: 6px;
    color: #12348c;
    font: bold 27px/30px "Noto Sans CJK SC", sans-serif;
}

.swoosh {
    position: absolute;
    left: 0;
    top: 18px;
    width: 96px;
    height: 32px;
}

.logo-lab {
    display: flex;
    align-items: flex-end;
    height: 36px;
    padding-left: 10px;
    color: #3b5670;
    font: 300 34px/37px Lato, sans-serif;
}

.logo-lab svg {
    width: 35px;
    height: 35px;
}

.old-links {
    padding: 34px 0 0 9px;
}

.old-links i {
    margin: 0 7px;
}

.user {
    margin-left: auto;
    padding-top: 14px;
    text-align: right;
}

.user p a {
    margin: 0 1px;
}

.user p a:last-child {
    margin-right: 0;
}

.page .home {
    color: #e47911;
}

.to-taobao {
    height: 21px;
    margin-top: 2px;
    padding: 0 5px;
    border: 1px solid #b5b5b5;
    border-radius: 2px;
    background: linear-gradient(#fff, #e4e4e4);
}

.nav {
    display: flex;
    align-items: flex-end;
    height: 35px;
    padding: 0 6px 0 3px;
    border: solid #f08200;
    border-width: 1px 0 0;
    border-bottom: 1px solid #d04a08;
    border-radius: 4px 4px 0 0;
    background: linear-gradient(#ff9c00, #ff5c00);
}

.page .nav a {
    width: 123px;
    height: 34px;
    padding-left: 6px;
    color: #fffbdc;
    font-size: 15px;
    font-weight: bold;
    line-height: 34px;
    text-align: center;
}

.page .nav .current {
    width: 102px;
    height: 29px;
    margin-bottom: -1px;
    padding: 0;
    border-top: 1px solid #c84a10;
    border-radius: 4px 4px 0 0;
    background: #fff;
    color: #000;
    line-height: 26px;
}

.page .nav .current + a {
    width: 113px;
    padding-right: 4px;
}

.helper {
    display: flex;
    align-items: center;
    height: 23px;
    margin: 0 0 5px auto;
    padding: 0 8px 0 5px;
    gap: 5px;
    border-radius: 2px;
    background: linear-gradient(#fff, #e6e6e6);
    color: #111;
    font-weight: bold;
}

.helper svg:first-child {
    width: 16px;
    height: 16px;
}

.subnav {
    display: flex;
    height: 31px;
    padding: 4px 0 0 123px;
    gap: 4px;
    border: 1px solid #e3e5e8;
    border-top: 0;
    border-radius: 0 0 4px 4px;
    background: linear-gradient(#fff 40%, #eceef0);
}

.page .subnav a {
    height: 22px;
    padding: 0 14px;
    border: 1px solid transparent;
    border-radius: 3px;
    color: #555;
    line-height: 20px;
}

.page .subnav a:last-child {
    padding-left: 8px;
}

.page .subnav .current {
    border-color: #c4c4c4;
    background: linear-gradient(#f2f2f2, #e0e0e0);
}

.columns {
    display: flex;
    align-items: flex-start;
    gap: 11px;
    padding-top: 13px;
}

.records {
    flex: 1;
    min-width: 0;
}

.heading {
    display: flex;
    height: 45px;
    padding-right: 4px;
    border-bottom: 2px solid #bbb;
}

.heading h1 {
    margin-right: 8px;
    color: #000;
    font-size: 18px;
    line-height: 35px;
}

.heading p {
    line-height: 38px;
}

.heading i {
    margin: 0 2px;
}

.heading .caret, .filter .caret {
    margin: 0 2px 2px 5px;
    vertical-align: middle;
}

.balance {
    margin-left: auto;
    font-size: 14px;
    line-height: 56px;
}

.balance b {
    color: #28b478;
    font: bold 13px "DejaVu Sans", sans-serif;
}

.filter {
    display: flex;
    align-items: flex-end;
    height: 41px;
    padding-left: 9px;
    gap: 21px;
    border-bottom: 1px solid #c4c4c4;
    background: #f8f8f8;
    line-height: 40px;
}

.filter b {
    margin: 0 1px 0 3px;
    font: bold 14px "Liberation Sans", Arial, sans-serif;
}

.filter .in {
    color: #28b478;
}

.filter .out {
    color: #f2730c;
}

.more-filter {
    display: flex;
    align-items: center;
    height: 31px;
    margin-left: 3px;
    padding: 0 13px 9px 14px;
    gap: 6px;
    border: 1px solid #bdbdbd;
    border-bottom: 0;
    border-radius: 5px 5px 0 0;
    background: linear-gradient(#fdfdfd, #e6e6e6);
    color: #0e6bc9;
}

.more-filter svg {
    width: 4px;
    height: 8px;
}

.sort {
    display: flex;
    align-items: center;
    height: 52px;
    padding: 5px 4px 0 0;
}

.select {
    position: relative;
    display: flex;
    margin: 0 15px 0 4px;
    border: 1px solid #999;
}

.select select {
    width: 143px;
    height: 17px;
    padding-left: 3px;
    appearance: none;
    color: #000;
}

.select i {
    position: absolute;
    right: 0;
    top: 0;
    display: flex;
    align-items: center;
    justify-content: center;
    width: 17px;
    height: 17px;
    border: 1px solid #777;
    background: #e2e2e2;
    pointer-events: none;
}

.select .caret {
    color: #000;
}

.sort .download {
    margin-left: auto;
}

/* record list */
table {
    width: 100%;
    border-collapse: separate;
    border-spacing: 0;
    table-layout: fixed;
}

.c-type { width: 33px; }
.c-time { width: 119px; }
.c-name { width: 177px; }
.c-party { width: 97px; }
.c-dir { width: 48px; }
.c-sum { width: 85px; }
.c-state { width: 111px; }
.c-note { width: 35px; }

th {
    height: 26px;
    padding: 0 4px 2px;
    border-bottom: 1px solid #ccc;
    background: #f3f3f3;
    font-weight: normal;
    text-align: left;
}

td {
    height: 51px;
    padding: 5px 4px;
    border-bottom: 1px solid #ccc;
}

tbody tr:nth-child(even) td {
    background: #fafcff;
}

.updown {
    width: 8px;
    height: 10px;
}

.dir .caret, .sum .updown {
    margin-left: 2px;
}

th .caret {
    margin-bottom: 2px;
}

th.dir, th.sum, .state, .op {
    text-align: right;
}

.name, .state, .op, th.dir {
    padding-right: 3px;
    padding-left: 3px;
}

.type svg {
    display: block;
    width: 16px;
    height: 16px;
    margin-left: 4px;
}

.name a, .name span {
    display: block;
}

.name span, .state span, .op span {
    color: #999;
}

.add {
    width: 12px;
    height: 14px;
    margin: 0 0 1px 2px;
    vertical-align: middle;
}

.chat {
    display: flex;
    align-items: center;
    width: 77px;
    height: 18px;
    padding-left: 1px;
    gap: 3px;
    border: 1px solid #ee9a50;
    border-radius: 2px;
    background: linear-gradient(#fffdf0, #ffe08a);
    color: #c03408;
}

.chat svg {
    width: 18px;
    height: 16px;
}

td.dir {
    padding-right: 8px;
    text-align: right;
}

td.out {
    color: #e47911;
}

td.in {
    color: #28a468;
}

td.sum {
    font-size: 13px;
    font-weight: bold;
    text-align: right;
}

.state i {
    margin: 0 4px;
}

.op i {
    margin: 0 5px;
}

tbody tr td.op {
    background: #ffffee;
}

tbody tr.pending td.op {
    background: #ffffc4;
}

th.note {
    padding-right: 0;
    padding-left: 7px;
}

td.note {
    padding: 0;
}

.note svg {
    display: block;
    width: 16px;
    height: 17px;
    margin: 0 0 2px 12px;
}

.account {
    display: flex;
    flex-direction: column;
    gap: 3px;
    width: 29px;
    padding: 3px;
    border-radius: 5px;
    background: #bababa;
}

.account button, .mail {
    display: flex;
    align-items: center;
    justify-content: center;
    height: 24px;
    border-radius: 3px;
    background: #fff;
}

.account button svg {
    width: 16px;
    height: 16px;
}

.account .mail {
    justify-content: flex-start;
    height: 215px;
    padding-top: 11px;
    color: #999;
    font: 11px/22px "Liberation Mono", monospace;
    writing-mode: vertical-rl;
}

/* status bar */
.statusbar {
    display: flex;
    align-items: center;
    height: 23px;
    padding-left: 2px;
    background: #e9e7e3;
}

.statusbar a {
    margin-left: 1px;
    color: #000;
    text-decoration: underline;
}

.status-tools {
    display: flex;
    margin-left: auto;
}

.cell {
    display: flex;
    align-items: center;
    height: 20px;
    padding: 0 3px;
    gap: 3px;
    border-left: 1px solid #b9b7b1;
}

.cell .caret {
    margin: 0 0 0 4px;
}

.icons {
    padding-left: 5px;
    gap: 7px;
}

.icons svg:last-of-type {
    margin-right: -4px;
}

.pressed {
    outline: 1px solid #b9b7b1;
    outline-offset: 3px;
    background: #f6f5f3;
}

/* taskbar */
.taskbar {
    display: flex;
    align-items: center;
    height: 40px;
    padding-left: 7px;
    border-top: 1px solid #1b2326;
    background:
        linear-gradient(rgba(255, 255, 255, .35), rgba(255, 255, 255, 0) 3px),
        linear-gradient(90deg, #16292f, #1f4046 12%, #24373d 22%, #303b43 30%, #33414a 45%, #3c4b52 60%, #56666a 78%, #76817f 86%, #6a7578);
    color: #fff;
}

.task {
    width: 61px;
    height: 38px;
}

.task > svg {
    display: block;
    width: 32px;
    height: 32px;
    margin: 0 auto;
}

.orb {
    width: 39px;
    margin-right: 12px;
}

.task.orb > svg {
    width: 38px;
    height: 38px;
}

.window {
    width: 58px;
    margin-right: 4px;
    border: 1px solid #10181b;
    border-radius: 3px;
    box-shadow: inset 0 0 0 1px rgba(255, 255, 255, .4);
    background: linear-gradient(160deg, #77868a, #3c4a50);
}

.front {
    margin-left: 3px;
    background: linear-gradient(160deg, #d4dadb, #8b9799);
}

.qq {
    width: 54px;
    margin-right: 8px;
    box-shadow: inset 0 0 0 1px rgba(255, 255, 255, .6), 3px 0 0 #5c6b70;
    background: linear-gradient(#f4d468, #d9842a);
}

.tray {
    display: flex;
    gap: 8px;
    margin-left: auto;
}

.clock {
    width: 80px;
    margin: 0 0 0 4px;
    line-height: 17px;
    text-align: center;
}

.show-desktop {
    width: 14px;
    height: 39px;
    border: 1px solid #a4adaf;
    background: linear-gradient(#98a2a4, #5f6b6e);
}
```
